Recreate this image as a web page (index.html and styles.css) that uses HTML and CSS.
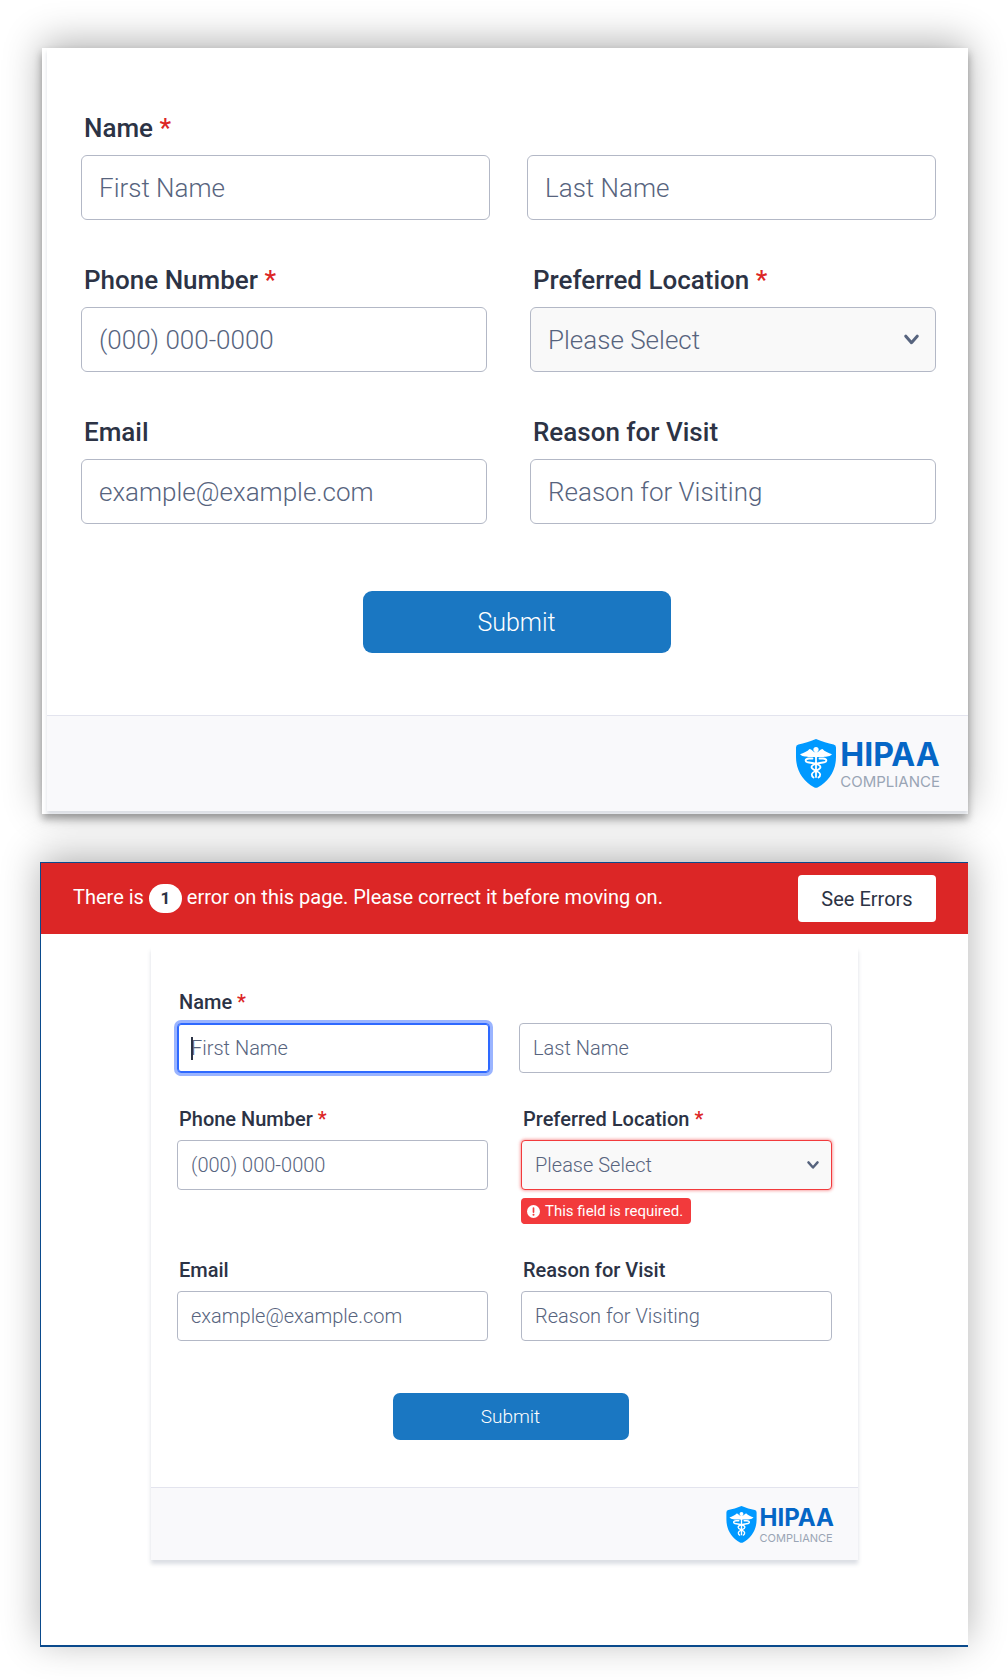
FILE: index.html
```html
<!DOCTYPE html>
<html lang="en">
<head>
<meta charset="utf-8">
<meta name="viewport" content="width=device-width, initial-scale=1">
<title>Patient Contact Form</title>
<link rel="stylesheet" href="styles.css">
</head>
<body>
<svg class="sprite" aria-hidden="true">
  <symbol id="shield" viewBox="0 0 40 49">
    <path fill="#0099ff" d="M20 0C26 2.400 32 4.200 37.600 5.400Q40 6 40 8.500V18C40 32 32.500 42.500 22 48.200Q20 49.200 18 48.200C7.500 42.500 0 32 0 18V8.500Q0 6 2.400 5.400C8 4.200 14 2.400 20 0Z"/>
    <circle cx="20" cy="10.500" r="2.600" fill="#fff"/>
    <path fill="#fff" d="M20 13.500C16.500 13 16 10 13.500 10C11.500 12.500 7.500 13.800 4 15.200C7 18.200 11 17.600 13.500 18H18.500L20 19L21.500 18H26.500C29 17.600 33 18.200 36 15.200C32.500 13.800 28.500 12.500 26.500 10C24 10 23.500 13 20 13.500Z"/>
    <path fill="none" stroke="#fff" stroke-width="1.800" stroke-linecap="round" d="M20 13V38M16.500 19.500H13C8.500 20 8.500 23 13 23.500C17 24 24.500 25 24.500 28C24.500 31.500 15.800 32 15.800 35.500Q15.800 37.500 17.500 38.500M23.500 19.500H27C31.500 20 31.500 23 27 23.500C23 24 15.500 25 15.500 28C15.500 31.500 24.200 32 24.200 35.500Q24.200 37.500 22.500 38.500"/>
  </symbol>
  <symbol id="chevron" viewBox="0 0 14 10">
    <path fill="none" stroke="#57647e" stroke-width="2.800" stroke-linecap="round" stroke-linejoin="round" d="M1.700 1.900L7 8L12.300 1.900"/>
  </symbol>
</svg>

<main class="page">
  <section class="panel panel--plain">
    <form class="form form--large">
      <div class="form__body">
        <div class="row row--name">
          <div class="field">
            <label class="label" for="first-a">Name <span class="required">*</span></label>
            <input class="control" id="first-a" type="text" placeholder="First Name">
          </div>
          <div class="field">
            <input class="control" type="text" placeholder="Last Name" aria-label="Last Name">
          </div>
        </div>
        <div class="row">
          <div class="field">
            <label class="label" for="phone-a">Phone Number <span class="required">*</span></label>
            <input class="control" id="phone-a" type="tel" placeholder="(000) 000-0000">
          </div>
          <div class="field">
            <label class="label" for="location-a">Preferred Location <span class="required">*</span></label>
            <div class="select">
              <select class="control control--select" id="location-a"><option>Please Select</option></select>
              <svg class="select__icon" aria-hidden="true"><use href="#chevron"/></svg>
            </div>
          </div>
        </div>
        <div class="row">
          <div class="field">
            <label class="label" for="email-a">Email</label>
            <input class="control" id="email-a" type="email" placeholder="example@example.com">
          </div>
          <div class="field">
            <label class="label" for="reason-a">Reason for Visit</label>
            <input class="control" id="reason-a" type="text" placeholder="Reason for Visiting">
          </div>
        </div>
        <div class="actions"><button class="submit" type="button">Submit</button></div>
      </div>
      <footer class="form__footer">
        <div class="badge">
          <svg class="badge__shield" aria-hidden="true"><use href="#shield"/></svg>
          <div class="badge__text"><strong class="badge__title">HIPAA</strong><span class="badge__note">COMPLIANCE</span></div>
        </div>
      </footer>
    </form>
  </section>

  <section class="panel panel--framed">
    <div class="banner" role="alert">
      <p class="banner__text">There is <span class="banner__count">1</span> error on this page. Please correct it before moving on.</p>
      <button class="banner__button" type="button">See Errors</button>
    </div>
    <div class="panel__content">
      <form class="form form--compact">
        <div class="form__body">
          <div class="row row--name">
            <div class="field">
              <label class="label" for="first-b">Name <span class="required">*</span></label>
              <div class="active-field">
                <input class="control control--active" id="first-b" type="text" placeholder="First Name">
                <span class="caret"></span>
              </div>
            </div>
            <div class="field">
              <input class="control" type="text" placeholder="Last Name" aria-label="Last Name">
            </div>
          </div>
          <div class="row">
            <div class="field">
              <label class="label" for="phone-b">Phone Number <span class="required">*</span></label>
              <input class="control" id="phone-b" type="tel" placeholder="(000) 000-0000">
            </div>
            <div class="field">
              <label class="label" for="location-b">Preferred Location <span class="required">*</span></label>
              <div class="select">
                <select class="control control--select control--invalid" id="location-b" aria-invalid="true" aria-describedby="location-error"><option>Please Select</option></select>
                <svg class="select__icon" aria-hidden="true"><use href="#chevron"/></svg>
              </div>
              <p class="error" id="location-error">
                <svg class="error__icon" viewBox="0 0 14 14" aria-hidden="true"><circle cx="7" cy="7" r="7" fill="#fff"/><path d="M7 3.200V7.600" stroke="#f23a3c" stroke-width="1.800" stroke-linecap="round"/><circle cx="7" cy="10.500" r="1.100" fill="#f23a3c"/></svg>
                This field is required.
              </p>
            </div>
          </div>
          <div class="row">
            <div class="field">
              <label class="label" for="email-b">Email</label>
              <input class="control" id="email-b" type="email" placeholder="example@example.com">
            </div>
            <div class="field">
              <label class="label" for="reason-b">Reason for Visit</label>
              <input class="control" id="reason-b" type="text" placeholder="Reason for Visiting">
            </div>
          </div>
          <div class="actions"><button class="submit" type="button">Submit</button></div>
        </div>
        <footer class="form__footer">
          <div class="badge">
            <svg class="badge__shield" aria-hidden="true"><use href="#shield"/></svg>
            <div class="badge__text"><strong class="badge__title">HIPAA</strong><span class="badge__note">COMPLIANCE</span></div>
          </div>
        </footer>
      </form>
    </div>
  </section>
</main>
</body>
</html>
```
FILE: styles.css
```css
* { box-sizing: border-box; }

body {
  margin: 0;
  background: #fff;
  color: #2c3345;
  font-family: Roboto, "Liberation Sans", sans-serif;
}

button, input, select { font-family: inherit; }

.sprite { display: none; }

.page {
  display: flex;
  flex-direction: column;
  gap: 48px;
  padding: 48px 40px 33px;
}

.panel {
  background: #fff;
  box-shadow: 0 -6px 36px rgba(0, 0, 0, 0.3);
}

.panel--plain {
  margin-left: 2px;
  padding: 0 0 3px 5px;
  overflow: hidden;
  box-shadow: 0 5px 8px rgba(0, 0, 0, 0.34), 0 -6px 36px rgba(0, 0, 0, 0.3);
}

.panel--framed {
  border: solid #0a4a8c;
  border-width: 1px 0 2px 1px;
}

.panel__content { padding: 13px 110px 85px; }

/* Form sizes */
.form--large {
  --text: 26px;
  --button-text: 25px;
  --label-line: 30px;
  --label-gap: 12px;
  --label-indent: 3px;
  --control-height: 65px;
  --control-pad: 17px;
  --radius: 6px;
  --row-gap: 45px;
  --name-columns: 37px;
  --columns: 43px;
  --chevron: 15px;
  --chevron-inset: 17px;
  --body-pad: 65px 32px 62px 34px;
  --actions-gap: 67px;
  --actions-shift: 16px;
  --submit-width: 308px;
  --submit-height: 62px;
  --submit-radius: 9px;
  --footer-height: 96px;
  --footer-pad: 28px;
  --shield-width: 40px;
  --shield-height: 49px;
  --badge-gap: 4px;
  --badge-title: 32px;
  --badge-title-line: 32px;
  --badge-note: 15px;
  --badge-note-line: 22px;
}

.form--compact {
  --text: 20px;
  --button-text: 19px;
  --label-line: 24px;
  --label-gap: 9px;
  --label-indent: 2px;
  --control-height: 50px;
  --control-pad: 13px;
  --radius: 4px;
  --row-gap: 34px;
  --name-columns: 29px;
  --columns: 33px;
  --chevron: 12px;
  --chevron-inset: 13px;
  --body-pad: 43px 26px 47px;
  --actions-gap: 52px;
  --actions-shift: 12px;
  --submit-width: 236px;
  --submit-height: 47px;
  --submit-radius: 7px;
  --footer-height: 73px;
  --footer-pad: 24px;
  --shield-width: 31px;
  --shield-height: 37px;
  --badge-gap: 3px;
  --badge-title: 24px;
  --badge-title-line: 24px;
  --badge-note: 11px;
  --badge-note-line: 17px;
}

.form {
  background: #fff;
  box-shadow: 0 4px 4px rgba(87, 100, 126, 0.21);
}

.form__body {
  display: flex;
  flex-direction: column;
  gap: var(--row-gap);
  padding: var(--body-pad);
}

.row {
  display: grid;
  grid-template-columns: 1fr 1fr;
  column-gap: var(--columns);
}

.row--name {
  column-gap: var(--name-columns);
  align-items: end;
}

.field { min-width: 0; }

.label {
  display: block;
  margin-bottom: var(--label-gap);
  padding-left: var(--label-indent);
  font-size: var(--text);
  line-height: var(--label-line);
  font-weight: 500;
  white-space: nowrap;
}

.required { color: #dc2626; }

.control {
  display: block;
  width: 100%;
  height: var(--control-height);
  margin: 0;
  padding: 0 var(--control-pad);
  border: 1px solid #b3b8c6;
  border-radius: var(--radius);
  background: #fff;
  color: #57647e;
  font-size: var(--text);
  font-weight: 300;
  outline: none;
}

.control::placeholder {
  color: #57647e;
  opacity: 1;
}

.control--select {
  appearance: none;
  background: #f9f9f9;
}

.control--invalid {
  border-color: #f23a3c;
  box-shadow: 0 0 3px 1px rgba(242, 58, 60, 0.45);
}

.control--active {
  border-color: #2e69ff;
  box-shadow: inset 0 0 0 1px #2e69ff, 0 0 0 3px #9ab4ff;
}

.active-field, .select { position: relative; }

.caret {
  position: absolute;
  top: 14px;
  left: 14px;
  width: 2px;
  height: 23px;
  background: #2c3345;
}

.select__icon {
  position: absolute;
  top: 0;
  right: var(--chevron-inset);
  width: var(--chevron);
  height: 100%;
  pointer-events: none;
}

.error {
  display: flex;
  align-items: center;
  gap: 5px;
  width: max-content;
  height: 26px;
  margin: 8px 0 0;
  padding: 0 8px 0 6px;
  border-radius: 4px;
  background: #f23a3c;
  color: #fff;
  font-size: 15px;
}

.error__icon {
  width: 13px;
  height: 13px;
}

.actions {
  display: flex;
  justify-content: center;
  margin-top: calc(var(--actions-gap) - var(--row-gap));
  padding-left: var(--actions-shift);
}

.submit {
  width: var(--submit-width);
  height: var(--submit-height);
  padding: 0;
  border: 0;
  border-radius: var(--submit-radius);
  background: #1a77c2;
  color: #fff;
  font-size: var(--button-text);
  font-weight: 300;
}

.form__footer {
  display: flex;
  align-items: center;
  justify-content: flex-end;
  height: var(--footer-height);
  padding-right: var(--footer-pad);
  border-top: 1px solid #e3e4ee;
  background: #f9f9fb;
}

.badge {
  display: flex;
  align-items: center;
  gap: var(--badge-gap);
  font-family: Inter, "Liberation Sans", sans-serif;
}

.badge__shield {
  width: var(--shield-width);
  height: var(--shield-height);
}

.badge__text {
  display: flex;
  flex-direction: column;
  padding-top: 4px;
}

.badge__title {
  color: #0566c6;
  font-size: var(--badge-title);
  line-height: var(--badge-title-line);
  font-weight: 700;
}

.badge__note {
  color: #9aa5b5;
  font-size: var(--badge-note);
  line-height: var(--badge-note-line);
}

.banner {
  display: flex;
  align-items: center;
  justify-content: space-between;
  min-height: 71px;
  padding: 12px 32px;
  background: #dc2626;
  color: #fff;
}

.banner__text {
  margin: 0;
  font-size: 20px;
}

.banner__count {
  display: inline-block;
  width: 33px;
  border-radius: 15px;
  background: #fff;
  color: #2c3345;
  font-size: 17px;
  font-weight: 700;
  line-height: 29px;
  text-align: center;
}

.banner__button {
  width: 138px;
  height: 47px;
  padding: 0;
  border: 0;
  border-radius: 4px;
  background: #fff;
  color: #2c3345;
  font-size: 20px;
}
```
